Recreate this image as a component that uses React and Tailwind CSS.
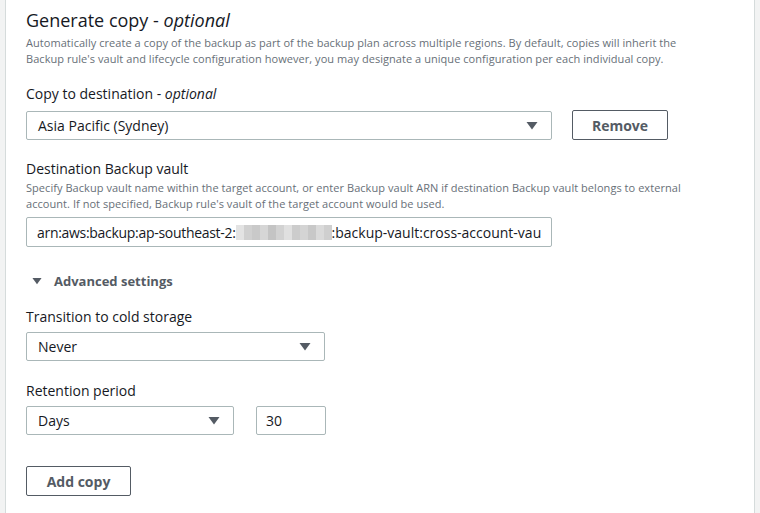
import React from "react";

const Caret = ({ className = "", w = 12, h = 9 }) => (
  <svg width={w} height={h} viewBox="0 0 12 9" className={className}>
    <polygon points="0.5,1 11.5,1 6,8.5" fill="#545b64" />
  </svg>
);

const Select = ({ value, className = "" }) => (
  <div
    className={`flex items-center justify-between h-[29px] border border-[#aab7b8] rounded-[2px] bg-white pl-[11px] pr-[13px] text-[14px] text-[#16191f] ${className}`}
  >
    <span>{value}</span>
    <Caret />
  </div>
);

const Btn = ({ children, className = "" }) => (
  <button
    className={`h-[30px] border border-[#545b64] rounded-[2px] bg-white text-[14px] font-bold text-[#545b64] ${className}`}
  >
    {children}
  </button>
);

const blur = [
  "#e3e3e3", "#d0d0d0", "#c9c9c9", "#d6d6d6", "#c4c4c4", "#d2d2d2", "#e0e0e0", "#cccccc", "#d4d4d4", "#c8c8c8", "#dadada", "#cfcfcf",
];

export default function App() {
  return (
    <div
      className="flex h-[513px] w-[760px] bg-[#f2f3f3] overflow-hidden"
      style={{ fontFamily: '"Open Sans", "Noto Sans", Arial, sans-serif' }}
    >
      <div className="w-[5px] shrink-0" />
      <div className="w-[750px] shrink-0 bg-white border-l border-r border-[#d5dbdb] pl-[20px] pr-[20px]">
        <h2 className="mt-[8px] text-[18px] leading-[24px] text-[#16191f]">
          Generate copy - <i>optional</i>
        </h2>
        <p className="mt-[3px] text-[11px] leading-[16px] text-[#687078] tracking-[0.05px]">
          Automatically create a copy of the backup as part of the backup plan across multiple regions. By default, copies will inherit the
          <br />
          Backup rule's vault and lifecycle configuration however, you may designate a unique configuration per each individual copy.
        </p>

        <div className="mt-[17px] text-[14px] leading-[20px] text-[#16191f]">
          Copy to destination - <i>optional</i>
        </div>
        <div className="mt-[6px] flex items-center gap-[20px]">
          <Select value="Asia Pacific (Sydney)" className="w-[526px]" />
          <Btn className="w-[96px]">Remove</Btn>
        </div>

        <div className="mt-[19px] text-[14px] leading-[20px] text-[#16191f]">
          Destination Backup vault
        </div>
        <p className="mt-[1px] text-[11px] leading-[16px] text-[#687078] tracking-[0.05px]">
          Specify Backup vault name within the target account, or enter Backup vault ARN if destination Backup vault belongs to external
          <br />
          account. If not specified, Backup rule's vault of the target account would be used.
        </p>
        <div className="mt-[5px] w-[526px] h-[30px] border border-[#aab7b8] rounded-[2px] flex items-center pl-[10px] text-[14px] text-[#16191f] whitespace-nowrap overflow-hidden">
          <span className="tracking-[-0.3px]">arn:aws:backup:ap-southeast-2:</span>
          <span className="flex h-[15px] w-[96px] shrink-0">
            {blur.map((c, i) => (
              <span key={i} className="h-full flex-1" style={{ background: c }} />
            ))}
          </span>
          <span>:backup-vault:cross-account-vau</span>
        </div>

        <div className="mt-[24px] flex items-center gap-[12px] pl-[6px] text-[13px] font-bold text-[#545b64] leading-[20px]">
          <Caret w={10} h={8} />
          <span>Advanced settings</span>
        </div>

        <div className="mt-[16px] text-[14px] leading-[20px] text-[#16191f]">
          Transition to cold storage
        </div>
        <Select value="Never" className="mt-[5px] w-[299px]" />

        <div className="mt-[20px] text-[14px] leading-[20px] text-[#16191f]">
          Retention period
        </div>
        <div className="mt-[5px] flex items-center gap-[22px]">
          <Select value="Days" className="w-[208px]" />
          <div className="w-[70px] h-[29px] border border-[#aab7b8] rounded-[2px] flex items-center pl-[9px] text-[14px] text-[#16191f]">
            30
          </div>
        </div>

        <Btn className="mt-[31px] w-[105px]">Add copy</Btn>
      </div>
    </div>
  );
}
